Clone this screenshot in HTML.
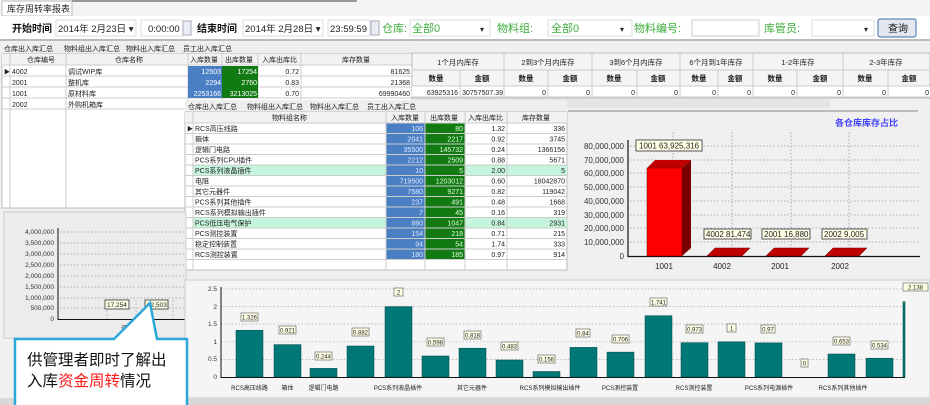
<!DOCTYPE html>
<html><head><meta charset="utf-8"><style>
html,body{margin:0;padding:0;background:#f0f0f0;}
svg{display:block;font-family:"Liberation Sans","Noto Sans CJK SC",sans-serif;}
</style></head><body>
<svg width="930" height="405" viewBox="0 0 930 405" xmlns="http://www.w3.org/2000/svg">
<rect width="930" height="405" fill="#f0f0f0"/>
<!-- top tab -->
<rect x="0" y="0" width="930" height="16" fill="#f4f4f4"/>
<rect x="2" y="1" width="70" height="15" fill="#fff" stroke="#bbb"/>
<rect x="72" y="0" width="285" height="2" fill="#999"/>
<text x="7" y="12" font-size="9" fill="#222">库存周转率报表</text>
<!-- filter bar -->
<rect x="0" y="16" width="930" height="24" fill="#fff"/>
<line x1="0" y1="40" x2="930" y2="40" stroke="#bbb" stroke-width="2"/>
<g font-size="10">
<text x="12" y="32" font-weight="bold" fill="#111">开始时间</text>
<rect x="56" y="20" width="80" height="16" fill="#fff" stroke="#ddd"/>
<text x="58" y="32" fill="#222" font-size="9.5">2014年  2月23日 ▾</text>
<rect x="141" y="20" width="42" height="16" fill="#fff" stroke="#ddd"/>
<text x="148" y="32" fill="#222" font-size="9.5">0:00:00</text>
<rect x="183" y="21" width="8" height="14" fill="#e8eef4" stroke="#aab"/>
<text x="197" y="32" font-weight="bold" fill="#111">结束时间</text>
<rect x="243" y="20" width="80" height="16" fill="#fff" stroke="#ddd"/>
<text x="245" y="32" fill="#222" font-size="9.5">2014年  2月28日 ▾</text>
<rect x="328" y="20" width="42" height="16" fill="#fff" stroke="#ddd"/>
<text x="330" y="32" fill="#222" font-size="9.5">23:59:59</text>
<rect x="371" y="21" width="8" height="14" fill="#e8eef4" stroke="#aab"/>
<text x="382" y="32" fill="#3cae3c" font-size="11">仓库:</text>
<rect x="410" y="20" width="80" height="16" fill="#fff" stroke="#ddd"/>
<text x="412" y="32" fill="#3cae3c" font-size="11">全部0</text>
<text x="480" y="32" fill="#222" font-size="8">▾</text>
<text x="497" y="32" fill="#3cae3c" font-size="11">物料组:</text>
<rect x="548" y="20" width="84" height="16" fill="#fff" stroke="#ddd"/>
<text x="551" y="32" fill="#3cae3c" font-size="11">全部0</text>
<text x="620" y="32" fill="#222" font-size="8">▾</text>
<text x="634" y="32" fill="#3cae3c" font-size="11">物料编号:</text>
<rect x="692" y="20" width="67" height="16" fill="#fff" stroke="#ccc"/>
<text x="764" y="32" fill="#3cae3c" font-size="11">库管员:</text>
<rect x="812" y="20" width="62" height="16" fill="#fff" stroke="#ddd"/>
<text x="864" y="32" fill="#222" font-size="8">▾</text>
<rect x="878" y="19" width="38" height="18" rx="2" fill="#e4e8ee" stroke="#3b6ea8"/>
<text x="888" y="32" fill="#111" font-size="10">查询</text>
</g>
<!-- grid1 tabs -->
<g font-size="7" fill="#222">
<rect x="2" y="42" width="410" height="12" fill="#eee"/>
<text x="4" y="51">仓库出入库汇总</text><text x="64" y="51">物料组出入库汇总</text><text x="126" y="51">物料出入库汇总</text><text x="183" y="51">员工出入库汇总</text>
</g>
<!-- grid1 -->
<rect x="2" y="54" width="410" height="154" fill="#fff" stroke="#bbb"/>
<rect x="2" y="54" width="410" height="11" fill="#f2f2f2"/>
<g stroke="#ccc">
<line x1="10" y1="54" x2="10" y2="208"/><line x1="66" y1="54" x2="66" y2="208"/><line x1="188" y1="54" x2="188" y2="208"/>
<line x1="222" y1="54" x2="222" y2="100"/><line x1="258" y1="54" x2="258" y2="100"/><line x1="301" y1="54" x2="301" y2="100"/>
<line x1="2" y1="65" x2="412" y2="65"/><line x1="2" y1="76" x2="412" y2="76"/><line x1="2" y1="87" x2="412" y2="87"/><line x1="2" y1="98" x2="412" y2="98"/><line x1="2" y1="109" x2="185" y2="109"/>
</g>
<rect x="188" y="66" width="34" height="32" fill="#4a7fc4"/>
<rect x="222" y="66" width="36" height="32" fill="#127a12"/>
<g font-size="7" fill="#222">
<text x="27" y="62">仓库编号</text><text x="115" y="62">仓库名称</text><text x="190" y="62">入库数量</text><text x="225" y="62">出库数量</text><text x="262" y="62">入库出库比</text><text x="342" y="62">库存数量</text>
<text x="4" y="74" font-size="6">▶</text>
<text x="12" y="74">4002</text><text x="68" y="74">调试WIP库</text>
<text x="12" y="85">2001</text><text x="68" y="85">整机库</text>
<text x="12" y="96">1001</text><text x="68" y="96">原材料库</text>
<text x="12" y="107">2002</text><text x="68" y="107">外购机箱库</text>
<g text-anchor="end"><text x="221" y="74" fill="#fff">12503</text><text x="257" y="74" fill="#fff">17254</text><text x="299" y="74">0.72</text><text x="410" y="74">81625</text>
<text x="221" y="85" fill="#fff">2294</text><text x="257" y="85" fill="#fff">2760</text><text x="299" y="85">0.83</text><text x="410" y="85">21368</text>
<text x="221" y="96" fill="#fff">2253166</text><text x="257" y="96" fill="#fff">3213025</text><text x="299" y="96">0.70</text><text x="410" y="96">69990460</text></g>
</g>
<!-- right grid -->
<rect x="412" y="53" width="518" height="45" fill="#f4f4f4" stroke="#bbb"/>
<rect x="412" y="86" width="518" height="11" fill="#fff"/>
<g stroke="#ccc">
<line x1="412" y1="70" x2="930" y2="70"/><line x1="412" y1="86" x2="930" y2="86"/><line x1="412" y1="97" x2="930" y2="97"/>
<line x1="504" y1="53" x2="504" y2="97"/><line x1="592" y1="53" x2="592" y2="97"/><line x1="680" y1="53" x2="680" y2="97"/><line x1="753" y1="53" x2="753" y2="97"/><line x1="843" y1="53" x2="843" y2="97"/>
<line x1="460" y1="70" x2="460" y2="97"/><line x1="548" y1="70" x2="548" y2="97"/><line x1="637" y1="70" x2="637" y2="97"/><line x1="718" y1="70" x2="718" y2="97"/><line x1="797" y1="70" x2="797" y2="97"/><line x1="888" y1="70" x2="888" y2="97"/>
</g>
<g font-size="7.5" fill="#222" text-anchor="middle">
<text x="458" y="65">1个月内库存</text><text x="548" y="65">2到3个月内库存</text><text x="636" y="65">3到6个月内库存</text><text x="716" y="65">6个月到1年库存</text><text x="798" y="65">1-2年库存</text><text x="886" y="65">2-3年库存</text>
<g font-weight="bold"><text x="436" y="81">数量</text><text x="482" y="81">金额</text><text x="526" y="81">数量</text><text x="570" y="81">金额</text><text x="614" y="81">数量</text><text x="658" y="81">金额</text><text x="699" y="81">数量</text><text x="735" y="81">金额</text><text x="775" y="81">数量</text><text x="820" y="81">金额</text><text x="865" y="81">数量</text><text x="909" y="81">金额</text></g>
</g>
<g font-size="7" fill="#222" text-anchor="end">
<text x="458" y="95">63925316</text><text x="503" y="95">30757507.39</text><text x="546" y="95">0</text><text x="590" y="95">0</text><text x="635" y="95">0</text><text x="678" y="95">0</text><text x="716" y="95">0</text><text x="751" y="95">0</text><text x="795" y="95">0</text><text x="841" y="95">0</text><text x="886" y="95">0</text><text x="929" y="95">0</text>
</g>
<rect x="412" y="99" width="418" height="9" fill="#e4e4e4"/>
<!-- grid2 -->
<rect x="185" y="100" width="382" height="12" fill="#eee"/>
<g font-size="7" fill="#222"><text x="188" y="109">仓库出入库汇总</text><text x="247" y="109">物料组出入库汇总</text><text x="310" y="109">物料出入库汇总</text><text x="367" y="109">员工出入库汇总</text></g>
<rect x="185" y="112" width="382" height="158" fill="#fff" stroke="#bbb"/>
<rect x="185" y="112" width="382" height="11" fill="#f2f2f2"/>
<rect x="193" y="165" width="374" height="10.5" fill="#c5f5dc"/>
<rect x="193" y="217.5" width="374" height="10.5" fill="#c5f5dc"/>
<rect x="386" y="123" width="39" height="137" fill="#4a7fc4"/>
<rect x="425" y="123" width="40" height="137" fill="#127a12"/>
<g stroke="#ccc">
<line x1="193" y1="112" x2="193" y2="270"/><line x1="386" y1="112" x2="386" y2="270"/><line x1="425" y1="112" x2="425" y2="270"/><line x1="465" y1="112" x2="465" y2="270"/><line x1="507" y1="112" x2="507" y2="270"/>
<line x1="185" y1="123" x2="567" y2="123"/><line x1="185" y1="133.5" x2="567" y2="133.5"/><line x1="185" y1="144" x2="567" y2="144"/><line x1="185" y1="154.5" x2="567" y2="154.5"/><line x1="185" y1="165" x2="567" y2="165"/><line x1="185" y1="175.5" x2="567" y2="175.5"/><line x1="185" y1="186" x2="567" y2="186"/><line x1="185" y1="196.5" x2="567" y2="196.5"/><line x1="185" y1="207" x2="567" y2="207"/><line x1="185" y1="217.5" x2="567" y2="217.5"/><line x1="185" y1="228" x2="567" y2="228"/><line x1="185" y1="238.5" x2="567" y2="238.5"/><line x1="185" y1="249" x2="567" y2="249"/><line x1="185" y1="259.5" x2="567" y2="259.5"/>
</g>
<g font-size="7" fill="#222">
<text x="272" y="120">物料组名称</text><text x="391" y="120">入库数量</text><text x="430" y="120">出库数量</text><text x="468" y="120">入库出库比</text><text x="522" y="120">库存数量</text>
<text x="187" y="131" font-size="6">▶</text>
<text x="195" y="131">RCS高压线路</text><text x="195" y="141.5">箱体</text><text x="195" y="152">逻辑门电路</text><text x="195" y="162.5">PCS系列CPU插件</text><text x="195" y="173">PCS系列液晶插件</text><text x="195" y="183.5">电阻</text><text x="195" y="194">其它元器件</text><text x="195" y="204.5">PCS系列其他插件</text><text x="195" y="215">RCS系列模拟输出插件</text><text x="195" y="225.5">PCS低压电气保护</text><text x="195" y="236">PCS测控装置</text><text x="195" y="246.5">稳定控制装置</text><text x="195" y="257">RCS测控装置</text>
<g text-anchor="end">
<g fill="#dfe8ff"><text x="423" y="131">106</text><text x="423" y="141.5">2041</text><text x="423" y="152">35500</text><text x="423" y="162.5">2212</text><text x="423" y="173">10</text><text x="423" y="183.5">719500</text><text x="423" y="194">7580</text><text x="423" y="204.5">237</text><text x="423" y="215">7</text><text x="423" y="225.5">880</text><text x="423" y="236">154</text><text x="423" y="246.5">94</text><text x="423" y="257">180</text></g>
<g fill="#e0ffe0"><text x="463" y="131">80</text><text x="463" y="141.5">2217</text><text x="463" y="152">145732</text><text x="463" y="162.5">2509</text><text x="463" y="173">5</text><text x="463" y="183.5">1203012</text><text x="463" y="194">9271</text><text x="463" y="204.5">491</text><text x="463" y="215">45</text><text x="463" y="225.5">1047</text><text x="463" y="236">218</text><text x="463" y="246.5">54</text><text x="463" y="257">185</text></g>
<text x="505" y="131">1.32</text><text x="505" y="141.5">0.92</text><text x="505" y="152">0.24</text><text x="505" y="162.5">0.88</text><text x="505" y="173">2.00</text><text x="505" y="183.5">0.60</text><text x="505" y="194">0.82</text><text x="505" y="204.5">0.48</text><text x="505" y="215">0.16</text><text x="505" y="225.5">0.84</text><text x="505" y="236">0.71</text><text x="505" y="246.5">1.74</text><text x="505" y="257">0.97</text>
<text x="565" y="131">336</text><text x="565" y="141.5">3745</text><text x="565" y="152">1366156</text><text x="565" y="162.5">5671</text><text x="565" y="173">5</text><text x="565" y="183.5">18042870</text><text x="565" y="194">119042</text><text x="565" y="204.5">1668</text><text x="565" y="215">319</text><text x="565" y="225.5">2931</text><text x="565" y="236">215</text><text x="565" y="246.5">333</text><text x="565" y="257">914</text>
</g></g>
<!-- right chart -->
<rect x="568" y="110" width="350" height="170" fill="#f0f0f0"/>
<line x1="568" y1="111" x2="918" y2="111" stroke="#bbb" stroke-width="2"/>
<text x="835" y="126" font-size="9" fill="#4545ff" font-weight="bold">各仓库库存占比</text>
<g stroke="#999" stroke-dasharray="1.5,2" stroke-width="0.8">
<line x1="630" y1="146" x2="920" y2="146"/><line x1="630" y1="160" x2="920" y2="160"/><line x1="630" y1="173" x2="920" y2="173"/><line x1="630" y1="187" x2="920" y2="187"/><line x1="630" y1="201" x2="920" y2="201"/><line x1="630" y1="215" x2="920" y2="215"/><line x1="630" y1="228" x2="920" y2="228"/><line x1="630" y1="242" x2="920" y2="242"/>
<line x1="673" y1="132" x2="673" y2="256"/><line x1="732" y1="132" x2="732" y2="256"/><line x1="791" y1="132" x2="791" y2="256"/><line x1="849" y1="132" x2="849" y2="256"/>
</g>
<line x1="628" y1="140" x2="628" y2="257" stroke="#111" stroke-width="1.2"/>
<line x1="628" y1="256.5" x2="920" y2="256.5" stroke="#111" stroke-width="1.2"/>
<g font-size="8" fill="#333" text-anchor="end">
<text x="624" y="149">80,000,000</text><text x="624" y="163">70,000,000</text><text x="624" y="176">60,000,000</text><text x="624" y="190">50,000,000</text><text x="624" y="204">40,000,000</text><text x="624" y="218">30,000,000</text><text x="624" y="231">20,000,000</text><text x="624" y="245">10,000,000</text><text x="624" y="259">0</text>
</g>
<polygon points="647,168 655,160 691,160 682,168" fill="#c00000"/>
<polygon points="682,168 691,160 691,248 682,256" fill="#7a0000"/>
<rect x="647" y="168" width="35" height="88" fill="#ff0000" stroke="#600" stroke-width="0.5"/>
<polygon points="707,256 715,248 750,248 742,256" fill="#c00000" stroke="#600" stroke-width="0.5"/>
<polygon points="766,256 774,248 809,248 801,256" fill="#c00000" stroke="#600" stroke-width="0.5"/>
<polygon points="825,256 833,248 867,248 859,256" fill="#c00000" stroke="#600" stroke-width="0.5"/>
<g font-size="8" fill="#222">
<rect x="636" y="140" width="66" height="11" fill="#ffffe6" stroke="#555"/><text x="639" y="148.5">1001 63,925,316</text>
<rect x="704" y="229" width="47" height="10" fill="#ffffe6" stroke="#555"/><text x="706" y="237">4002 81,474</text>
<rect x="762" y="229" width="48" height="10" fill="#ffffe6" stroke="#555"/><text x="764" y="237">2001 16,880</text>
<rect x="822" y="229" width="45" height="10" fill="#ffffe6" stroke="#555"/><text x="824" y="237">2002 9,005</text>
<g text-anchor="middle"><text x="664" y="269">1001</text><text x="722" y="269">4002</text><text x="780" y="269">2001</text><text x="840" y="269">2002</text></g>
</g>
<!-- left small chart -->
<rect x="4" y="212" width="182" height="126" fill="#ececec" stroke="#ccc"/>
<g stroke="#999" stroke-dasharray="1.5,2" stroke-width="0.7">
<line x1="60" y1="232" x2="185" y2="232"/><line x1="60" y1="243" x2="185" y2="243"/><line x1="60" y1="254" x2="185" y2="254"/><line x1="60" y1="265" x2="185" y2="265"/><line x1="60" y1="276" x2="185" y2="276"/><line x1="60" y1="287" x2="185" y2="287"/><line x1="60" y1="298" x2="185" y2="298"/><line x1="60" y1="308" x2="185" y2="308"/>
<line x1="107" y1="300" x2="107" y2="319"/><line x1="136" y1="300" x2="136" y2="319"/><line x1="173" y1="300" x2="173" y2="319"/>
</g>
<line x1="58" y1="228" x2="58" y2="320" stroke="#111"/>
<line x1="58" y1="319.5" x2="186" y2="319.5" stroke="#111"/>
<g font-size="6.5" fill="#333" text-anchor="end">
<text x="54" y="234">4,000,000</text><text x="54" y="245">3,500,000</text><text x="54" y="256">3,000,000</text><text x="54" y="267">2,500,000</text><text x="54" y="278">2,000,000</text><text x="54" y="289">1,500,000</text><text x="54" y="300">1,000,000</text><text x="54" y="310">500,000</text><text x="54" y="321">0</text>
</g>
<text x="121" y="330" font-size="6.5" fill="#333">调试WIP库</text>
<g font-size="6.5" fill="#222"><rect x="105" y="300" width="24" height="9" fill="#ffffe6" stroke="#555"/><text x="107" y="307">17,254</text>
<rect x="145" y="300" width="23" height="9" fill="#ffffe6" stroke="#555"/><text x="147" y="307">12,503</text></g>
<!-- bottom chart -->
<rect x="185" y="280" width="745" height="118" fill="#f5f5f5" stroke="#ccc"/>
<g stroke="#aaa" stroke-dasharray="1.5,2" stroke-width="0.7">
<line x1="221" y1="289" x2="905" y2="289"/><line x1="221" y1="306.6" x2="905" y2="306.6"/><line x1="221" y1="324" x2="905" y2="324"/><line x1="221" y1="341.8" x2="905" y2="341.8"/><line x1="221" y1="359.4" x2="905" y2="359.4"/>
</g>
<line x1="221" y1="287" x2="221" y2="378" stroke="#111"/>
<line x1="221" y1="377.5" x2="905" y2="377.5" stroke="#111"/>
<g font-size="6.5" fill="#333" text-anchor="end">
<text x="217" y="291">2.5</text><text x="217" y="309">2</text><text x="217" y="326">1.5</text><text x="217" y="344">1</text><text x="217" y="361">0.5</text><text x="217" y="379">0</text>
</g>
<g fill="#007878" stroke="#044" stroke-width="0.5">
<rect x="236" y="330.3" width="27" height="46.7"/><rect x="274" y="344.6" width="27" height="32.4"/><rect x="310" y="368.4" width="27" height="8.6"/><rect x="347" y="346" width="27" height="31"/><rect x="385" y="306.6" width="27" height="70.4"/><rect x="422" y="356" width="27" height="21"/><rect x="459" y="348.2" width="27" height="28.8"/><rect x="496" y="360" width="27" height="17"/><rect x="533" y="371.5" width="27" height="5.5"/><rect x="570" y="347.4" width="27" height="29.6"/><rect x="607" y="352.1" width="27" height="24.9"/><rect x="645" y="315.7" width="27" height="61.3"/><rect x="681" y="342.7" width="27" height="34.3"/><rect x="718" y="341.8" width="27" height="35.2"/><rect x="755" y="342.9" width="27" height="34.1"/><rect x="828" y="354" width="27" height="23"/><rect x="866" y="358.2" width="27" height="18.8"/><rect x="903" y="301.7" width="2" height="75.3"/>
</g>
<g font-size="6" fill="#222" text-anchor="middle">
<g fill="#ffffe6" stroke="#555" stroke-width="0.6">
<rect x="241" y="313" width="17" height="8"/><rect x="279" y="326" width="17" height="8"/><rect x="315" y="352" width="17" height="8"/><rect x="352" y="328" width="17" height="8"/><rect x="394" y="288" width="9" height="8"/><rect x="427" y="338" width="17" height="8"/><rect x="464" y="331" width="17" height="8"/><rect x="501" y="342" width="17" height="8"/><rect x="538" y="355" width="17" height="8"/><rect x="576" y="329" width="14" height="8"/><rect x="612" y="335" width="17" height="8"/><rect x="650" y="298" width="17" height="8"/><rect x="686" y="325" width="17" height="8"/><rect x="727" y="324" width="9" height="8"/><rect x="761" y="325" width="14" height="8"/><rect x="801" y="359" width="7" height="8"/><rect x="833" y="337" width="17" height="8"/><rect x="871" y="341" width="17" height="8"/><rect x="903" y="283" width="25" height="8"/>
</g>
<text x="249.5" y="319.5">1.326</text><text x="287.5" y="332.5">0.921</text><text x="323.5" y="358.5">0.244</text><text x="360.5" y="334.5">0.882</text><text x="398.5" y="294.5">2</text><text x="435.5" y="344.5">0.598</text><text x="472.5" y="337.5">0.818</text><text x="509.5" y="348.5">0.483</text><text x="546.5" y="361.5">0.156</text><text x="583" y="335.5">0.84</text><text x="620.5" y="341.5">0.706</text><text x="658.5" y="304.5">1.741</text><text x="694.5" y="331.5">0.973</text><text x="731.5" y="330.5">1</text><text x="768" y="331.5">0.97</text><text x="804.5" y="365.5">0</text><text x="841.5" y="343.5">0.653</text><text x="879.5" y="347.5">0.534</text><text x="915.5" y="289.5">2.138</text>
<text x="249.5" y="390">RCS高压线路</text><text x="287.5" y="390">箱体</text><text x="323.5" y="390">逻辑门电路</text><text x="398" y="390">PCS系列液晶插件</text><text x="472" y="390">其它元器件</text><text x="550" y="390">RCS系列模拟输出插件</text><text x="620" y="390">PCS测控装置</text><text x="694" y="390">RCS测控装置</text><text x="769" y="390">PCS系列电源插件</text><text x="843" y="390">RCS系列其他插件</text>
</g>
<!-- callout -->
<path d="M15,405 L15,339 L114,339 L150,303 L157,339 L187,339 L187,405" fill="#fff" stroke="#2aa8d8" stroke-width="2.5"/>
<text x="27" y="365" font-size="15.5" fill="#111">供管理者即时了解出</text>
<text x="27" y="386" font-size="15.5" fill="#111">入库<tspan fill="#ff1a1a">资金周转</tspan>情况</text>
<rect x="0" y="398" width="930" height="7" fill="#d8d8d8"/>
<rect x="15" y="398" width="172" height="7" fill="#fff"/>
<line x1="15" y1="398" x2="15" y2="405" stroke="#2aa8d8" stroke-width="2.5"/><line x1="187" y1="398" x2="187" y2="405" stroke="#2aa8d8" stroke-width="2.5"/>
</svg>
</body></html>
